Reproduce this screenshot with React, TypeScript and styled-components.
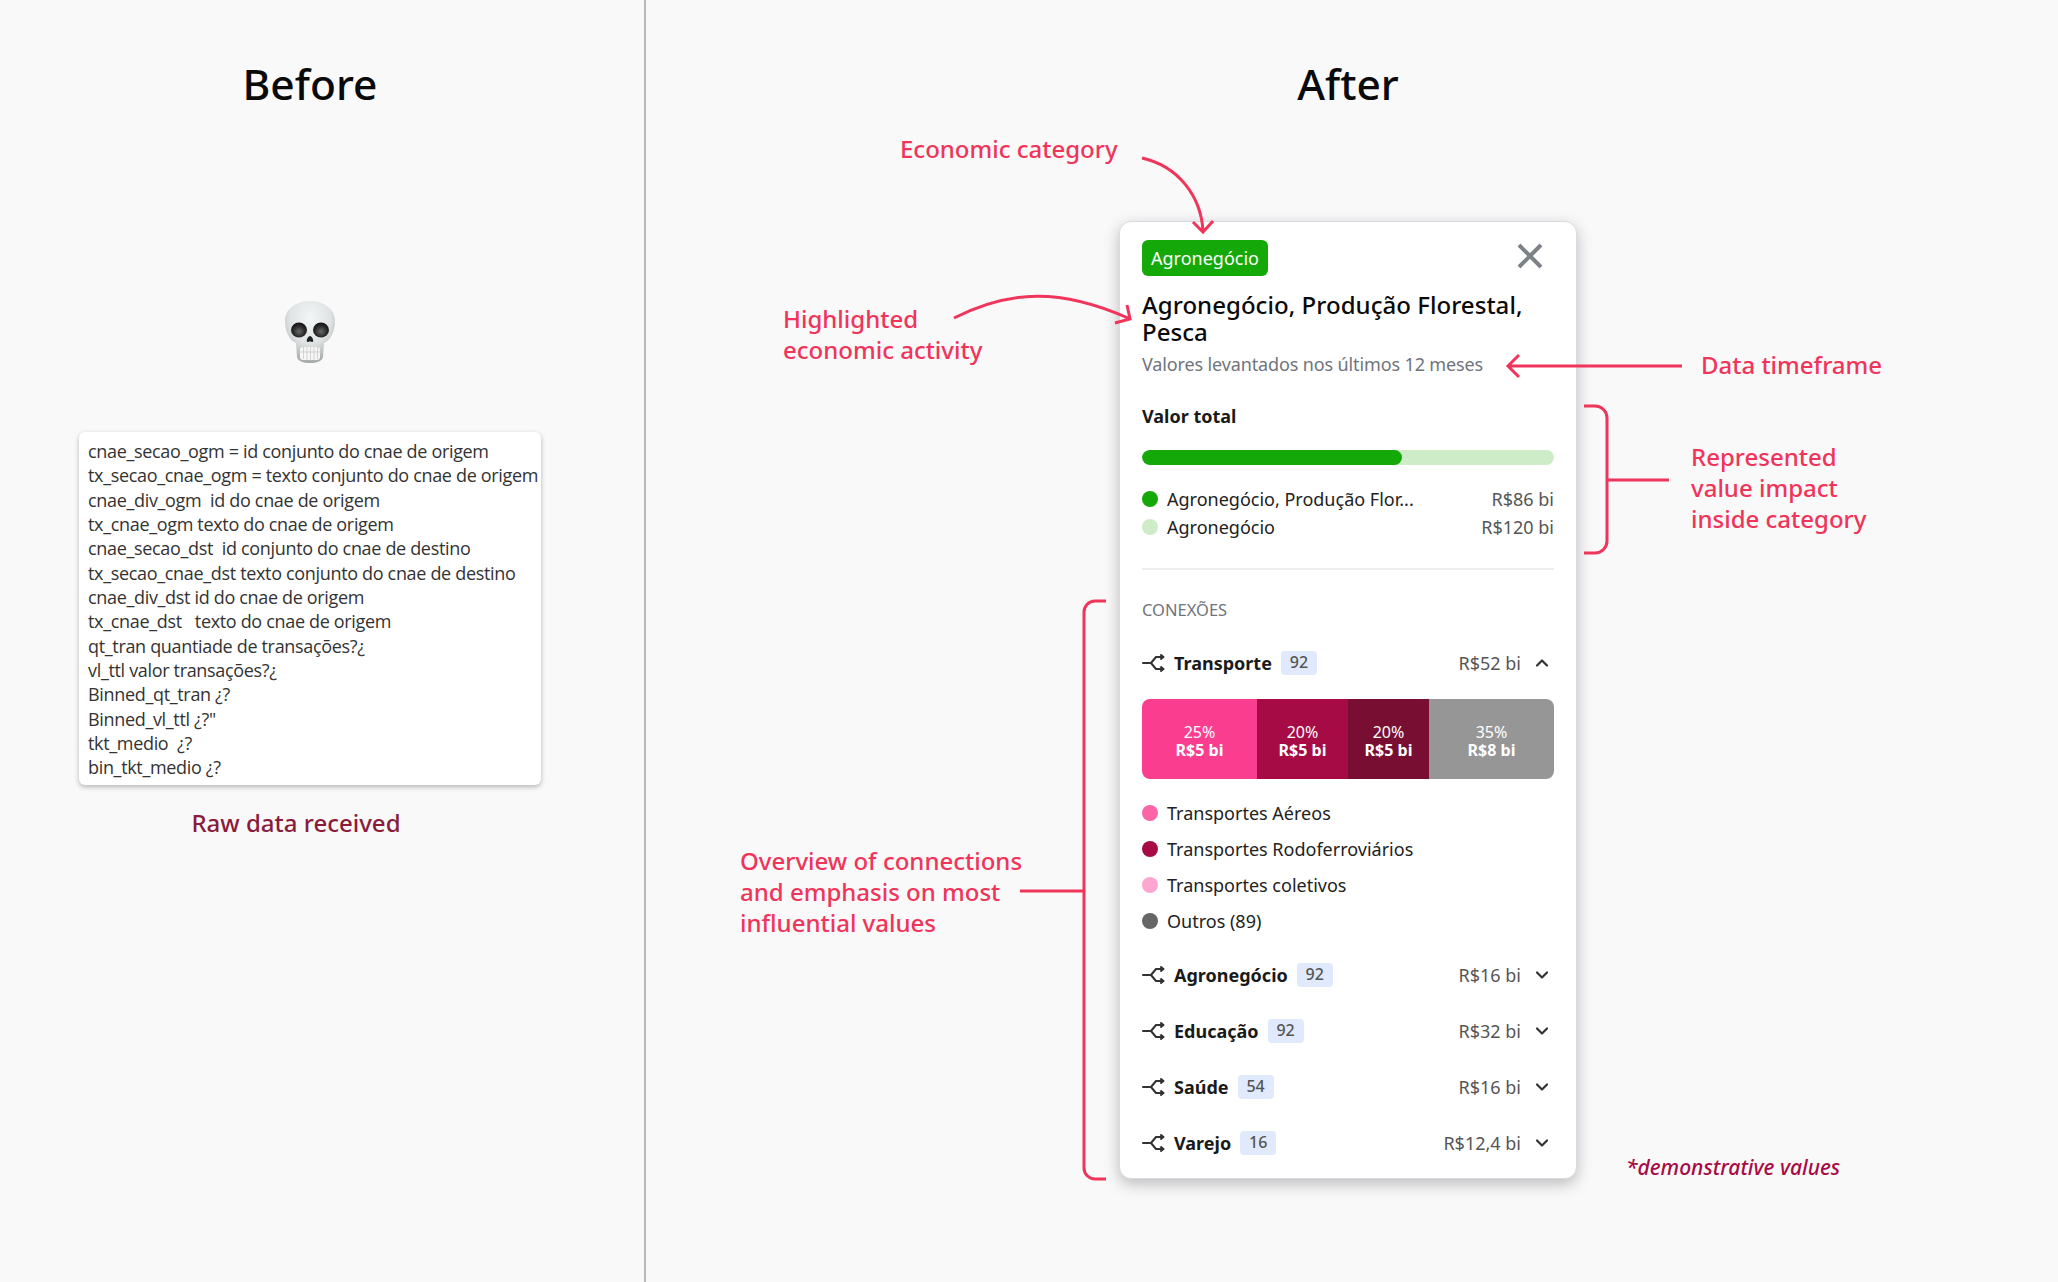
import React from "react";
import styled, { createGlobalStyle } from "styled-components";

const Global = createGlobalStyle`
  html, body { margin: 0; padding: 0; background: #f9f9f9; }
  body { font-family: "Noto Sans", Lato, sans-serif; }
  * { box-sizing: border-box; }
`;

const RED = "#f0345a";
const FONT = `"Noto Sans", Lato, sans-serif`;

const Page = styled.div`
  position: relative;
  width: 2058px;
  height: 1282px;
  overflow: hidden;
  display: grid;
  grid-template-columns: 644px 2px 1fr;
  background: #f9f9f9;
`;
const Divider = styled.div`background: #b9b9b9;`;

const Left = styled.section`
  display: flex;
  flex-direction: column;
  align-items: center;
  padding: 58px 103px 0 79px;
`;
const Heading = styled.h1`
  margin: 0;
  font: 500 42.5px/52px ${FONT};
  color: #0a0a0a;
`;
const Skull = styled.svg`
  display: block;
  margin-top: 191px;
  width: 54px;
  height: 62px;
`;
const RawCard = styled.div`
  margin-top: 69px;
  width: 462px;
  height: 353px;
  padding: 7px 0 0 9px;
  background: #fff;
  border-radius: 6px;
  box-shadow: 0 2px 5px rgba(0, 0, 0, 0.28);
`;
const RawLine = styled.div`
  font: 400 18px/24.33px "Open Sans", sans-serif;
  letter-spacing: -0.33px;
  color: #333;
  white-space: pre;
`;
const Caption = styled.div`
  margin: 20px 28px 0 0;
  font: 500 24px/36px ${FONT};
  color: #8a1b3b;
`;

const Right = styled.section`
  display: flex;
  flex-direction: column;
  padding: 58px 0 0 473px;
`;
const HeadingRow = styled.div`
  width: 458px;
  height: 142px;
  display: flex;
  justify-content: center;
  align-items: flex-start;
`;
const Card = styled.article`
  position: relative;
  width: 458px;
  padding: 18px 22px 7px;
  margin-top: 21px;
  background: #fff;
  border: 1px solid #d8dbe1;
  border-radius: 12px;
  box-shadow: 0 5px 15px rgba(0, 0, 0, 0.25);
`;
const CardTop = styled.div`
  display: flex;
  justify-content: space-between;
  align-items: flex-start;
`;
const Badge = styled.span`
  height: 36px;
  padding: 0 9px;
  display: inline-flex;
  align-items: center;
  background: #14a908;
  border-radius: 6px;
  color: #fff;
  font: 400 18px/36px ${FONT};
`;
const CloseIcon = styled.svg`
  display: block;
  margin: 3px 11px 0 0;
  width: 26px;
  height: 26px;
`;
const Title = styled.h2`
  margin: 15px 0 0;
  font: 500 24px/27px ${FONT};
  letter-spacing: 0.04px;
  color: #0a0a0a;
`;
const Subtitle = styled.p`
  margin: 8px 0 0;
  font: 400 18px/23px ${FONT};
  letter-spacing: -0.13px;
  color: #6f747c;
`;
const SectionLabel = styled.h3`
  margin: 28px 0 0;
  font: 700 18px/24px ${FONT};
  color: #1a1a1a;
`;
const Progress = styled.div`
  margin-top: 22px;
  height: 15px;
  border-radius: 8px;
  background: #cfecc9;
  overflow: hidden;
`;
const ProgressFill = styled.div`
  height: 100%;
  border-radius: 8px;
  background: #14a908;
`;
const TotalsList = styled.ul`
  list-style: none;
  margin: 20px 0 0;
  padding: 0;
`;
const TotalsRow = styled.li`
  display: flex;
  align-items: center;
  height: 28px;
  font: 400 18px/28px ${FONT};
  color: #222;
`;
const Dot = styled.span<{ $color: string }>`
  flex: none;
  width: 16px;
  height: 16px;
  margin-right: 9px;
  border-radius: 50%;
  background: ${(p) => p.$color};
`;
const Amount = styled.span`
  margin-left: auto;
  color: #555;
`;
const Rule = styled.hr`
  margin: 27px 0 0;
  height: 2px;
  border: 0;
  background: #eeeeee;
`;
const Overline = styled.div`
  margin-top: 30px;
  font: 400 16.5px/20px ${FONT};
  color: #6f747c;
`;
const ConnRow = styled.div<{ $height: number }>`
  display: flex;
  align-items: center;
  height: ${(p) => p.$height}px;
  font: 400 18px/24px ${FONT};
`;
const ConnList = styled.div`
  margin-top: 8px;
`;
const FirstConn = styled.div`
  margin-top: 25px;
`;
const ShareIcon = styled.svg`
  flex: none;
  display: block;
  width: 23px;
  height: 18px;
  margin-right: 9px;
`;
const ConnName = styled.span`
  font-weight: 700;
  color: #1a1a1a;
`;
const Count = styled.span`
  width: 36px;
  height: 24px;
  margin-left: 9px;
  border-radius: 4px;
  background: #e0eafc;
  color: #555;
  font: 500 16px/23px ${FONT};
  text-align: center;
`;
const ChevronIcon = styled.svg`
  display: block;
  flex: none;
  width: 14px;
  height: 10px;
  margin: 0 5px 0 14px;
`;
const Stack = styled.div`
  display: flex;
  margin-top: 18px;
  height: 80px;
  border-radius: 8px;
  overflow: hidden;
`;
const Segment = styled.div<{ $color: string; $w: number }>`
  width: ${(p) => p.$w}px;
  background: ${(p) => p.$color};
  display: flex;
  flex-direction: column;
  align-items: center;
  justify-content: center;
  padding-top: 3px;
  color: #fff;
`;
const SegPct = styled.span`
  font: 400 16px/18px ${FONT};
`;
const SegVal = styled.span`
  font: 700 16px/18px ${FONT};
`;
const KeyList = styled.ul`
  list-style: none;
  margin: 16px 0 0;
  padding: 0;
`;
const KeyRow = styled.li`
  display: flex;
  align-items: center;
  height: 36px;
  font: 400 18px/24px ${FONT};
  color: #222;
`;

const Note = styled.div<{ $x: number; $y: number }>`
  position: absolute;
  left: ${(p) => p.$x}px;
  top: ${(p) => p.$y}px;
  font: 500 24px/31px ${FONT};
  color: ${RED};
  white-space: pre;
`;
const Disclaimer = styled.div`
  position: absolute;
  left: 1626px;
  top: 1153px;
  font: italic 500 21px/28px ${FONT};
  color: #a60b45;
`;
const Overlay = styled.svg`
  position: absolute;
  inset: 0;
  width: 2058px;
  height: 1282px;
  pointer-events: none;
`;

const Share = () => (
  <ShareIcon viewBox="0 0 23 18" fill="none" stroke="#333" strokeWidth="2" strokeLinecap="round" strokeLinejoin="round">
    <path d="M1 9h8l5-6h7M9 9l5 6h7" />
    <path d="M19 1l2.5 2L19 5M19 13l2.5 2L19 17" />
  </ShareIcon>
);
const Chevron = ({ up }: { up?: boolean }) => (
  <ChevronIcon viewBox="0 0 14 10" fill="none" stroke="#333" strokeWidth="2.2" strokeLinecap="round" strokeLinejoin="round">
    <path d={up ? "M2 7.5l5-5 5 5" : "M2 2.5l5 5 5-5"} />
  </ChevronIcon>
);

const rawLines = [
  "cnae_secao_ogm = id conjunto do cnae de origem",
  "tx_secao_cnae_ogm = texto conjunto do cnae de origem",
  "cnae_div_ogm  id do cnae de origem",
  "tx_cnae_ogm texto do cnae de origem",
  "cnae_secao_dst  id conjunto do cnae de destino",
  "tx_secao_cnae_dst texto conjunto do cnae de destino",
  "cnae_div_dst id do cnae de origem",
  "tx_cnae_dst   texto do cnae de origem",
  "qt_tran quantiade de transações?¿",
  "vl_ttl valor transações?¿",
  "Binned_qt_tran ¿?",
  'Binned_vl_ttl ¿?"',
  "tkt_medio  ¿?",
  "bin_tkt_medio ¿?",
];
const segments = [
  { c: "#fb3d8f", w: 115, p: "25%", v: "R$5 bi" },
  { c: "#a60b45", w: 91, p: "20%", v: "R$5 bi" },
  { c: "#780f33", w: 81, p: "20%", v: "R$5 bi" },
  { c: "#969696", w: 125, p: "35%", v: "R$8 bi" },
];
const keys = [
  { c: "#fc64a8", t: "Transportes Aéreos" },
  { c: "#a60b45", t: "Transportes Rodoferroviários" },
  { c: "#fda6cf", t: "Transportes coletivos" },
  { c: "#666666", t: "Outros (89)" },
];
const conns = [
  { n: "Agronegócio", c: "92", v: "R$16 bi" },
  { n: "Educação", c: "92", v: "R$32 bi" },
  { n: "Saúde", c: "54", v: "R$16 bi" },
  { n: "Varejo", c: "16", v: "R$12,4 bi" },
];

const SkullArt = () => (
  <Skull viewBox="0 0 54 62">
    <defs>
      <radialGradient id="bone" cx="50%" cy="28%" r="75%">
        <stop offset="0" stopColor="#f3f6f6" />
        <stop offset="0.55" stopColor="#dfe3e3" />
        <stop offset="1" stopColor="#9fa3a3" />
      </radialGradient>
      <radialGradient id="socket" cx="50%" cy="60%" r="60%">
        <stop offset="0" stopColor="#6a6a6a" />
        <stop offset="0.6" stopColor="#2b2b2b" />
        <stop offset="1" stopColor="#111" />
      </radialGradient>
    </defs>
    <path d="M27 0C41 0 52 8 52 20c0 7-2 13-5 17-2 3-4 4-6 5l-1 14c-1 4-6 6-13 6s-12-2-13-6l-1-14c-2-1-4-2-6-5C4 33 2 27 2 20 2 8 13 0 27 0z" fill="url(#bone)" />
    <ellipse cx="16" cy="29" rx="8" ry="7.5" fill="url(#socket)" />
    <ellipse cx="38" cy="29" rx="8" ry="7.5" fill="url(#socket)" />
    <path d="M27 35c2 0 3.5 4 3.2 5.3-.3 1-2 .6-3.2 0-1.2.6-2.9 1-3.2 0C23.5 39 25 35 27 35z" fill="#222" />
    <rect x="17" y="46" width="20" height="13" rx="3" fill="#f6f6f6" />
    <path d="M17 51h20M20.5 46v12M24 46v13M27.5 46v13M31 46v13M34.5 46v12" stroke="#c4c4c4" strokeWidth="0.7" fill="none" />
  </Skull>
);

export default function App() {
  return (
    <Page>
      <Global />
      <Left>
        <Heading>Before</Heading>
        <SkullArt />
        <RawCard>
          {rawLines.map((l) => (
            <RawLine key={l}>{l}</RawLine>
          ))}
        </RawCard>
        <Caption>Raw data received</Caption>
      </Left>
      <Divider />
      <Right>
        <HeadingRow>
          <Heading>After</Heading>
        </HeadingRow>
        <Card>
          <CardTop>
            <Badge>Agronegócio</Badge>
            <CloseIcon viewBox="0 0 26 26" fill="none" stroke="#7d8188" strokeWidth="4">
              <path d="M2 2l22 22M24 2L2 24" />
            </CloseIcon>
          </CardTop>
          <Title>
            Agronegócio, Produção Florestal,
            <br />
            Pesca
          </Title>
          <Subtitle>Valores levantados nos últimos 12 meses</Subtitle>
          <SectionLabel>Valor total</SectionLabel>
          <Progress>
            <ProgressFill style={{ width: `${(260 / 412) * 100}%` }} />
          </Progress>
          <TotalsList>
            <TotalsRow>
              <Dot $color="#14a908" />
              Agronegócio, Produção Flor...
              <Amount>R$86 bi</Amount>
            </TotalsRow>
            <TotalsRow>
              <Dot $color="#cfecc9" />
              Agronegócio
              <Amount>R$120 bi</Amount>
            </TotalsRow>
          </TotalsList>
          <Rule />
          <Overline>CONEXÕES</Overline>
          <FirstConn>
            <ConnRow $height={36}>
              <Share />
              <ConnName>Transporte</ConnName>
              <Count>92</Count>
              <Amount>R$52 bi</Amount>
              <Chevron up />
            </ConnRow>
          </FirstConn>
          <Stack>
            {segments.map((s) => (
              <Segment key={s.c} $color={s.c} $w={s.w}>
                <SegPct>{s.p}</SegPct>
                <SegVal>{s.v}</SegVal>
              </Segment>
            ))}
          </Stack>
          <KeyList>
            {keys.map((k) => (
              <KeyRow key={k.t}>
                <Dot $color={k.c} />
                {k.t}
              </KeyRow>
            ))}
          </KeyList>
          <ConnList>
            {conns.map((c) => (
              <ConnRow key={c.n} $height={56}>
                <Share />
                <ConnName>{c.n}</ConnName>
                <Count>{c.c}</Count>
                <Amount>{c.v}</Amount>
                <Chevron />
              </ConnRow>
            ))}
          </ConnList>
        </Card>
      </Right>

      <Note $x={900} $y={133}>Economic category</Note>
      <Note $x={783} $y={303}>{"Highlighted\neconomic activity"}</Note>
      <Note $x={1701} $y={349}>Data timeframe</Note>
      <Note $x={1691} $y={441}>{"Represented\nvalue impact\ninside category"}</Note>
      <Note $x={740} $y={845}>{"Overview of connections\nand emphasis on most\ninfluential values"}</Note>
      <Disclaimer>*demonstrative values</Disclaimer>

      <Overlay viewBox="0 0 2058 1282" fill="none" stroke={RED} strokeWidth="3">
        <path d="M1142 158C1178 166 1201 196 1203 231M1193 222l10 10 10-11" />
        <path d="M954 318C1010 290 1060 288 1128 318M1127 305l3 14-15 4" />
        <path d="M1682 366H1508M1519 355l-11 11 11 11" />
        <path d="M1584 406H1595a12 12 0 0 1 12 12V541a12 12 0 0 1-12 12H1584M1607 480H1669" />
        <path d="M1106 601H1095a11 11 0 0 0-11 11V1168a11 11 0 0 0 11 11H1106M1084 891H1020" />
      </Overlay>
    </Page>
  );
}
